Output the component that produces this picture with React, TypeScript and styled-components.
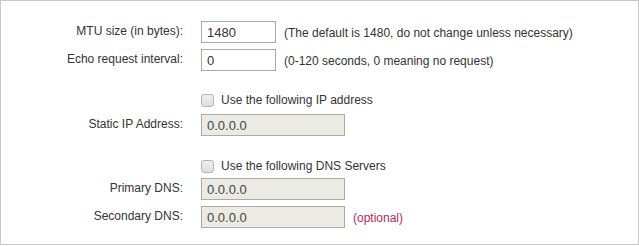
import { createGlobalStyle } from 'styled-components';
import styled from 'styled-components';

const GlobalStyle = createGlobalStyle`
  html, body {
    margin: 0;
    padding: 0;
    background: #ffffff;
  }
  body {
    font-family: 'Liberation Sans', Arial, sans-serif;
  }
`;

const Panel = styled.div`
  box-sizing: border-box;
  width: 639px;
  height: 245px;
  border: 1px solid #c8c8c8;
  padding-top: 20px;
  background: #fff;
  color: #333;
  font-size: 12px;
`;

const Row = styled.div<{ $top: number; $h?: number }>`
  display: flex;
  align-items: center;
  height: ${({ $h }) => $h ?? 22}px;
  margin-top: ${({ $top }) => $top}px;
`;

const Label = styled.div`
  box-sizing: border-box;
  width: 182px;
  flex: none;
  text-align: right;
  padding-bottom: 3px;
  margin-right: 18px;
`;

const Spacer = styled.div`
  width: 200px;
  flex: none;
`;

const Field = styled.input<{ $w: number }>`
  box-sizing: border-box;
  width: ${({ $w }) => $w}px;
  height: 22px;
  margin: 0;
  padding: 1px 5px 0;
  border: 1px solid #a9a9a9;
  border-radius: 0;
  background: #fff;
  color: #333;
  font-family: 'Liberation Sans', Arial, sans-serif;
  font-size: 13px;
  outline: none;

  &:disabled {
    background: #ebebe4;
    color: #444;
    border-color: #aaaaa6;
  }
`;

const Hint = styled.span<{ $accent?: boolean }>`
  margin-left: 8px;
  padding-top: 1px;
  color: ${({ $accent }) => ($accent ? '#b02a5e' : '#333')};
  white-space: nowrap;
`;

const Check = styled.input`
  appearance: none;
  box-sizing: border-box;
  width: 13px;
  height: 13px;
  margin: 0 7px 0 0;
  border: 1px solid #b4b4b4;
  border-radius: 3px;
  background: linear-gradient(#f0f0f0, #dedede);
  flex: none;
`;

const CheckText = styled.span`
  color: #333;
`;

const App = (): JSX.Element => {
  return (
    <>
      <GlobalStyle />
      <Panel>
        <Row $top={0}>
          <Label>MTU size (in bytes):</Label>
          <Field $w={75} defaultValue="1480" />
          <Hint>(The default is 1480, do not change unless necessary)</Hint>
        </Row>
        <Row $top={6}>
          <Label>Echo request interval:</Label>
          <Field $w={75} defaultValue="0" />
          <Hint>(0-120 seconds, 0 meaning no request)</Hint>
        </Row>
        <Row $top={19} $h={20}>
          <Spacer />
          <Check type="checkbox" />
          <CheckText>Use the following IP address</CheckText>
        </Row>
        <Row $top={4}>
          <Label>Static IP Address:</Label>
          <Field $w={144} defaultValue="0.0.0.0" disabled />
        </Row>
        <Row $top={20} $h={20}>
          <Spacer />
          <Check type="checkbox" />
          <CheckText>Use the following DNS Servers</CheckText>
        </Row>
        <Row $top={2}>
          <Label>Primary DNS:</Label>
          <Field $w={144} defaultValue="0.0.0.0" disabled />
        </Row>
        <Row $top={6}>
          <Label>Secondary DNS:</Label>
          <Field $w={144} defaultValue="0.0.0.0" disabled />
          <Hint $accent>(optional)</Hint>
        </Row>
      </Panel>
    </>
  );
};

export default App;
